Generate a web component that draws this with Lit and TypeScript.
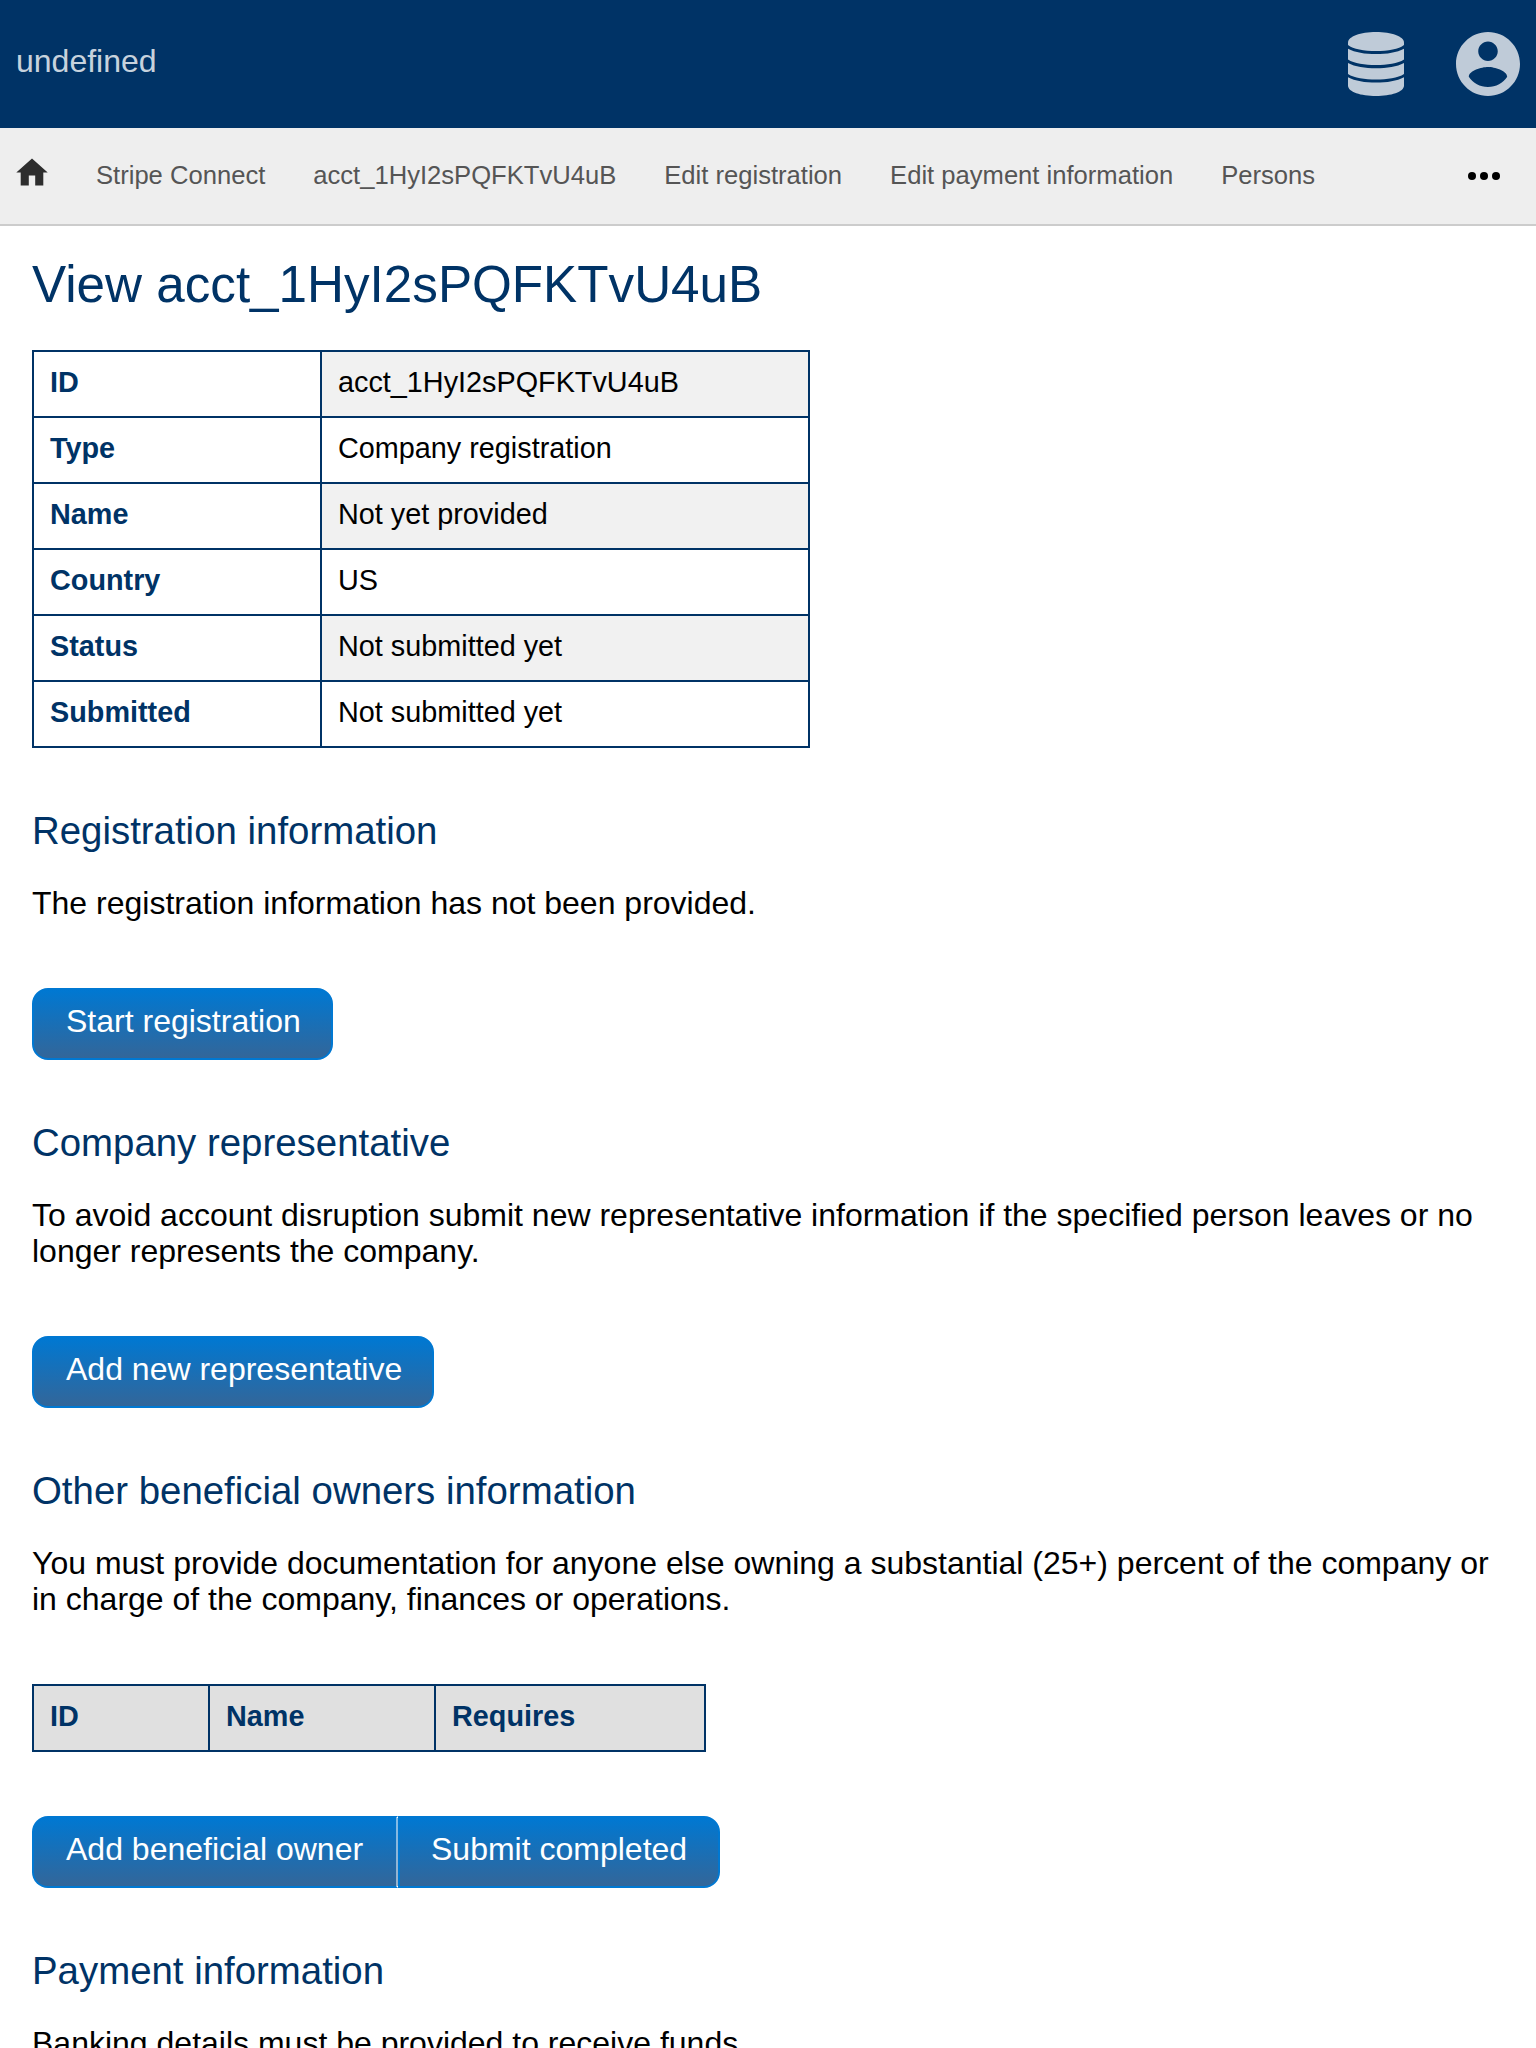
import { LitElement, html, css, svg } from "lit";
import { customElement } from "lit/decorators.js";

const details: [string, string][] = [
  ["ID", "acct_1HyI2sPQFKTvU4uB"],
  ["Type", "Company registration"],
  ["Name", "Not yet provided"],
  ["Country", "US"],
  ["Status", "Not submitted yet"],
  ["Submitted", "Not submitted yet"],
];

const links = ["Stripe Connect", "acct_1HyI2sPQFKTvU4uB", "Edit registration", "Edit payment information", "Persons"];

const databaseIcon = svg`
  <path d="M0 10.500C0 4.500 12.500 0 28 0S56 4.500 56 10.500V13C51 17 40 19 28 19S5 17 0 13Z"/>
  <path d="M0 16.700C7 20.500 17 22 28 22S49 20.500 56 16.700V27.500C50 31.500 39 33 28 33S6 31.500 0 27.500Z"/>
  <path d="M0 31C7 34.800 17 36.300 28 36.300S49 34.800 56 31V42C50 46 39 47.500 28 47.500S6 46 0 42Z"/>
  <path d="M0 45.300C7 49.100 17 50.600 28 50.600S49 49.100 56 45.300V53.500C56 60 43 64 28 64S0 60 0 53.500Z"/>`;

@customElement("app-root")
export class AppRoot extends LitElement {
  static styles = css`
    :host { display: block; height: 2048px; overflow: hidden; background: #fff; color: #000;
      font: 32px/36px "Liberation Sans", Arial, sans-serif; }
    * { box-sizing: border-box; }
    .header { height: 128px; background: #003366; display: flex; align-items: center; padding: 0 16px; color: rgba(255,255,255,.8); }
    .title { flex: 1; padding-bottom: 6px; }
    .header svg { display: block; fill: #bfcbd8; }
    .database { width: 56px; height: 64px; margin-right: 52px; }
    .account { width: 64px; height: 64px; }
    .nav { height: 98px; background: #eee; border-bottom: 2px solid #ccc; display: flex; align-items: center;
      padding: 0 36px 0 16px; font-size: 25.6px; line-height: 30px; color: #555; }
    .home { width: 32px; height: 28px; margin: 0 48px 8px 0; fill: #2d2d2d; }
    .link { margin-right: 48px; padding-bottom: 2px; white-space: nowrap; }
    .more { width: 32px; height: 8px; margin-left: auto; fill: #000; }
    .content { padding: 0 32px; }
    h1, h2, p { margin: 0; font-weight: normal; }
    h1, h2 { color: #003366; }
    h1 { font-size: 51.2px; line-height: 58px; padding-top: 30px; height: 124px; }
    h2 { font-size: 38.4px; line-height: 44px; }
    table { border-collapse: collapse; font-size: 28.8px; line-height: 32px; table-layout: fixed; }
    th, td { border: 2px solid #003366; height: 66px; padding: 0 16px 4px; text-align: left; font-weight: normal; }
    th { color: #003366; font-weight: bold; }
    .details { width: 778px; }
    .details th { width: 288px; }
    .details tr:nth-child(odd) td { background: #f1f1f1; }
    .owners { width: 674px; margin-top: 67px; }
    .owners th { background: #e0e0e0; }
    .col-id { width: 176px; }
    .col-name { width: 226px; }
    .section { padding-top: 61px; }
    .section + .section { padding-top: 61px; }
    .section p { margin-top: 32px; }
    .buttons { display: flex; height: 72px; margin-top: 67px; }
    .owners + .buttons { margin-top: 64px; }
    .button { border: 2px solid #0078d2; padding: 13px 30px 0 32px; white-space: nowrap; color: #fff;
      background: linear-gradient(#0078d2, #336699); }
    .button:first-child { border-top-left-radius: 16px; border-bottom-left-radius: 16px; }
    .button:last-child { border-top-right-radius: 16px; border-bottom-right-radius: 16px; }
    .button:not(:last-child) { width: 366px; border-right-color: rgba(255,255,255,.5); }
    .button + .button { width: 322px; padding-left: 31px; }
  `;

  render() {
    return html`
      <header class="header">
        <div class="title">undefined</div>
        <svg class="database" viewBox="0 0 56 64">${databaseIcon}</svg>
        <svg class="account" viewBox="2 2 20 20">
          <path d="M12 2C6.480 2 2 6.480 2 12s4.480 10 10 10 10-4.480 10-10S17.520 2 12 2zm0 3c1.660 0 3.050 1.390 3.050 3.050S13.660 11.100 12 11.100 8.950 9.710 8.950 8.050 10.340 5 12 5zm0 14.200c-2.500 0-4.710-1.280-6-3.220.030-1.990 4-3.080 6-3.080s5.970 1.090 6 3.080c-1.290 1.940-3.500 3.220-6 3.220z"/>
        </svg>
      </header>
      <nav class="nav">
        <svg class="home" viewBox="0 0 32 28"><path d="M16 .5 31.700 14.500H27.300V27.500H19.200V17.500H12.800V27.500H4.700V14.500H.3Z"/></svg>
        ${links.map((text) => html`<a class="link">${text}</a>`)}
        <svg class="more" viewBox="0 0 32 8"><circle cx="4" cy="4" r="4"/><circle cx="16" cy="4" r="4"/><circle cx="28" cy="4" r="4"/></svg>
      </nav>
      <main class="content">
        <h1>View acct_1HyI2sPQFKTvU4uB</h1>
        <table class="details">
          ${details.map(([name, value]) => html`<tr><th>${name}</th><td>${value}</td></tr>`)}
        </table>
        <section class="section">
          <h2>Registration information</h2>
          <p>The registration information has not been provided.</p>
          <div class="buttons"><a class="button">Start registration</a></div>
        </section>
        <section class="section">
          <h2>Company representative</h2>
          <p>To avoid account disruption submit new representative information if the specified person leaves or no longer represents the company.</p>
          <div class="buttons"><a class="button">Add new representative</a></div>
        </section>
        <section class="section">
          <h2>Other beneficial owners information</h2>
          <p>You must provide documentation for anyone else owning a substantial (25+) percent of the company or in charge of the company, finances or operations.</p>
          <table class="owners">
            <tr><th class="col-id">ID</th><th class="col-name">Name</th><th>Requires</th></tr>
          </table>
          <div class="buttons"><a class="button">Add beneficial owner</a><a class="button">Submit completed</a></div>
        </section>
        <section class="section">
          <h2>Payment information</h2>
          <p>Banking details must be provided to receive funds.</p>
        </section>
      </main>
    `;
  }
}
